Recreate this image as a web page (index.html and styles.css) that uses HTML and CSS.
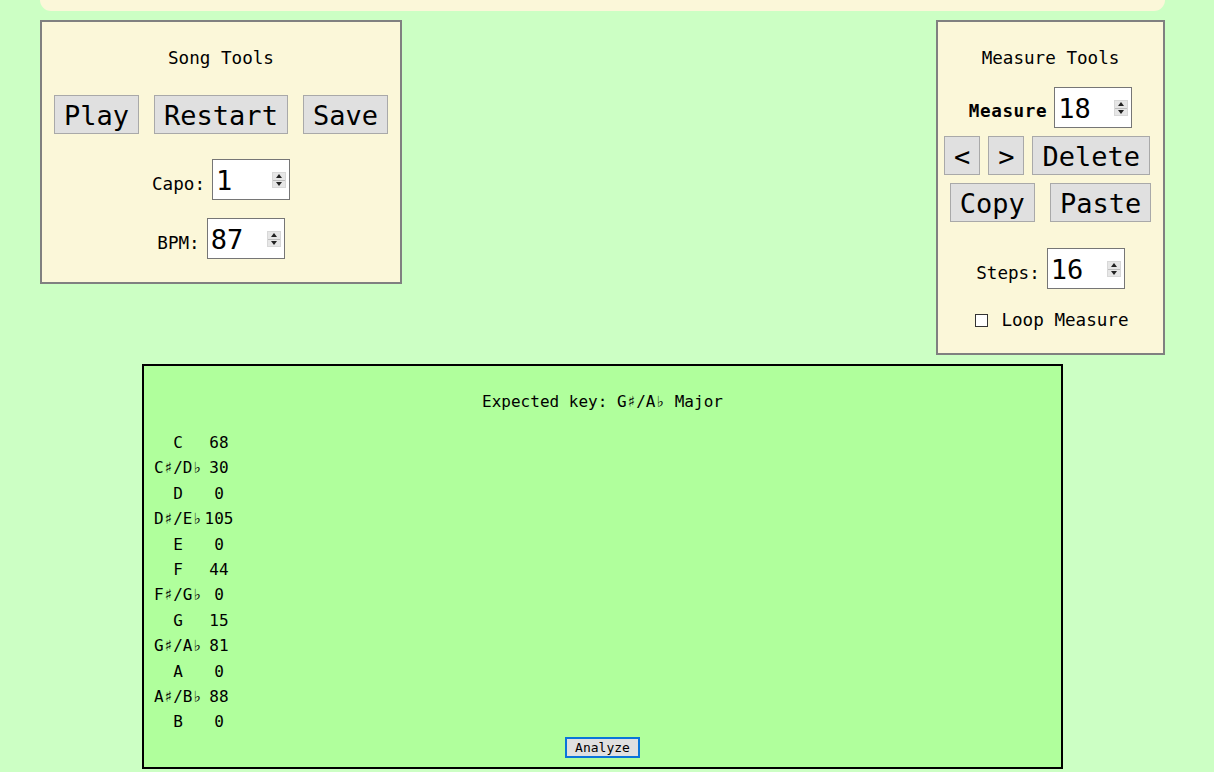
FILE: index.html
```html
<!DOCTYPE html>
<html>
<head>
<meta charset="utf-8">
<link rel="stylesheet" href="styles.css">
</head>
<body>
<div class="page">
  <div class="topband"></div>
  <div class="tools">
    <section class="panel song">
      <div class="title">Song Tools</div>
      <div class="btnrow gap15">
        <button class="big">Play</button>
        <button class="big">Restart</button>
        <button class="big">Save</button>
      </div>
      <div class="field capo">
        <label>Capo:</label>
        <div class="numbox"><input class="num" type="text" value="1"><span class="spin"><span class="up"></span><span class="down"></span></span></div>
      </div>
      <div class="field bpm">
        <label>BPM:</label>
        <div class="numbox"><input class="num" type="text" value="87"><span class="spin"><span class="up"></span><span class="down"></span></span></div>
      </div>
    </section>
    <section class="panel measure">
      <div class="title">Measure Tools</div>
      <div class="field mrow">
        <label class="bold">Measure</label>
        <div class="numbox"><input class="num" type="text" value="18"><span class="spin"><span class="up"></span><span class="down"></span></span></div>
      </div>
      <div class="btnrow gap8 row1">
        <button class="big">&lt;</button>
        <button class="big">&gt;</button>
        <button class="big">Delete</button>
      </div>
      <div class="btnrow gap15 row2">
        <button class="big">Copy</button>
        <button class="big">Paste</button>
      </div>
      <div class="field steps">
        <label>Steps:</label>
        <div class="numbox"><input class="num" type="text" value="16"><span class="spin"><span class="up"></span><span class="down"></span></span></div>
      </div>
      <div class="loop">
        <input type="checkbox" class="check">
        <span>Loop Measure</span>
      </div>
    </section>
  </div>
  <section class="analysis">
    <div class="key">Expected key: G♯/A♭ Major</div>
    <div class="rows">
      <div class="prow"><span class="note">C</span><span class="cnt">68</span></div>
      <div class="prow"><span class="note">C♯/D♭</span><span class="cnt">30</span></div>
      <div class="prow"><span class="note">D</span><span class="cnt">0</span></div>
      <div class="prow"><span class="note">D♯/E♭</span><span class="cnt">105</span></div>
      <div class="prow"><span class="note">E</span><span class="cnt">0</span></div>
      <div class="prow"><span class="note">F</span><span class="cnt">44</span></div>
      <div class="prow"><span class="note">F♯/G♭</span><span class="cnt">0</span></div>
      <div class="prow"><span class="note">G</span><span class="cnt">15</span></div>
      <div class="prow"><span class="note">G♯/A♭</span><span class="cnt">81</span></div>
      <div class="prow"><span class="note">A</span><span class="cnt">0</span></div>
      <div class="prow"><span class="note">A♯/B♭</span><span class="cnt">88</span></div>
      <div class="prow"><span class="note">B</span><span class="cnt">0</span></div>
    </div>
    <div class="analyze-wrap"><button class="analyze">Analyze</button></div>
  </section>
</div>
</body>
</html>
```
FILE: styles.css
```css
* { box-sizing: border-box; }
html, body { margin: 0; padding: 0; }
body {
  background: #ccffc4;
  font-family: "DejaVu Sans Mono", "Liberation Mono", monospace;
  color: #000;
  width: 1214px;
  height: 772px;
  overflow: hidden;
}
.page {
  padding: 0 49px 0 40px;
}
.topband {
  height: 11px;
  background: #fbf7d9;
  border-radius: 0 0 12px 12px;
}
.tools {
  display: flex;
  justify-content: space-between;
  align-items: flex-start;
  margin-top: 9px;
}
.panel {
  background: #fbf7d9;
  border: 2px solid #808080;
  display: flex;
  flex-direction: column;
  align-items: center;
}
.song {
  width: 362px;
  height: 264px;
  padding-top: 24px;
}
.measure {
  width: 229px;
  height: 335px;
  padding-top: 24px;
}
.title {
  font-size: 17.6px;
  line-height: 24px;
  height: 23px;
}
.btnrow {
  display: flex;
  justify-content: center;
}
.gap15 { gap: 15px; }
.gap8 { gap: 8px; }
.song .btnrow { margin-top: 26px; }
button.big {
  font-family: inherit;
  font-size: 27px;
  height: 39px;
  padding: 2px 9px 0;
  border: 1px solid #a9a9a9;
  background: #e0e0e0;
  color: #000;
  line-height: 35px;
  margin: 0;
  border-radius: 0;
}
.field {
  display: flex;
  align-items: center;
  gap: 7px;
}
.field label {
  font-size: 17.6px;
  padding-top: 8px;
}
.field label.bold {
  font-weight: bold;
  font-size: 17.6px;
  padding-top: 6px;
  letter-spacing: 0.6px;
}
.capo { margin-top: 25px; }
.bpm { margin-top: 18px; }
.numbox {
  width: 78px;
  height: 41px;
  border: 1px solid #767676;
  background: #fff;
  display: flex;
  align-items: center;
  padding: 1px 3px 0 3px;
}
.num {
  font-family: inherit;
  font-size: 27px;
  border: none;
  outline: none;
  background: transparent;
  width: 56px;
  padding: 0;
  margin: 0;
  color: #000;
}
.spin {
  width: 14px;
  height: 16px;
  margin-left: auto;
  display: flex;
  flex-direction: column;
  background: #e6e6e6;
  border: 1px solid #d8d8d8;
}
.spin .up, .spin .down {
  flex: 1;
  display: flex;
  align-items: center;
  justify-content: center;
}
.spin .up { border-bottom: 1px solid #bcbcbc; }
.spin .up::after {
  content: "";
  border-left: 3px solid transparent;
  border-right: 3px solid transparent;
  border-bottom: 4px solid #222;
}
.spin .down::after {
  content: "";
  border-left: 3px solid transparent;
  border-right: 3px solid transparent;
  border-top: 4px solid #222;
}
.mrow { margin-top: 18px; gap: 7px; }
.row1 { margin-top: 8px; padding-right: 7px; }
.row2 { margin-top: 8px; }
.steps { margin-top: 26px; }
.loop {
  margin-top: 19px;
  display: flex;
  align-items: center;
  font-size: 17.6px;
  line-height: 24px;
  padding-left: 3px;
}
.check {
  appearance: none;
  -webkit-appearance: none;
  width: 13px;
  height: 13px;
  border: 1px solid #333;
  background: #fff;
  margin: 0 13px 0 0;
  border-radius: 0;
}
.analysis {
  width: 921px;
  height: 405px;
  margin: 9px auto 0;
  background: #b0ff9c;
  border: 2px solid #000;
  padding: 24px 0 0 9px;
  display: flex;
  flex-direction: column;
}
.key {
  font-size: 16px;
  line-height: 24px;
  text-align: center;
  padding-right: 9px;
}
.rows {
  margin-top: 16px;
  font-size: 16px;
}
.prow {
  display: flex;
  height: 25.4px;
  line-height: 25.4px;
}
.note {
  width: 50px;
  text-align: center;
}
.cnt {
  width: 32px;
  text-align: center;
}
.analyze-wrap {
  display: flex;
  justify-content: center;
  padding-right: 9px;
  margin-top: 2px;
}
.analyze {
  font-family: inherit;
  font-size: 13px;
  height: 21px;
  padding: 0 8px;
  background: #e0e0e0;
  border: 2px solid #0a74da;
  color: #000;
  border-radius: 0;
  line-height: 17px;
}
```
